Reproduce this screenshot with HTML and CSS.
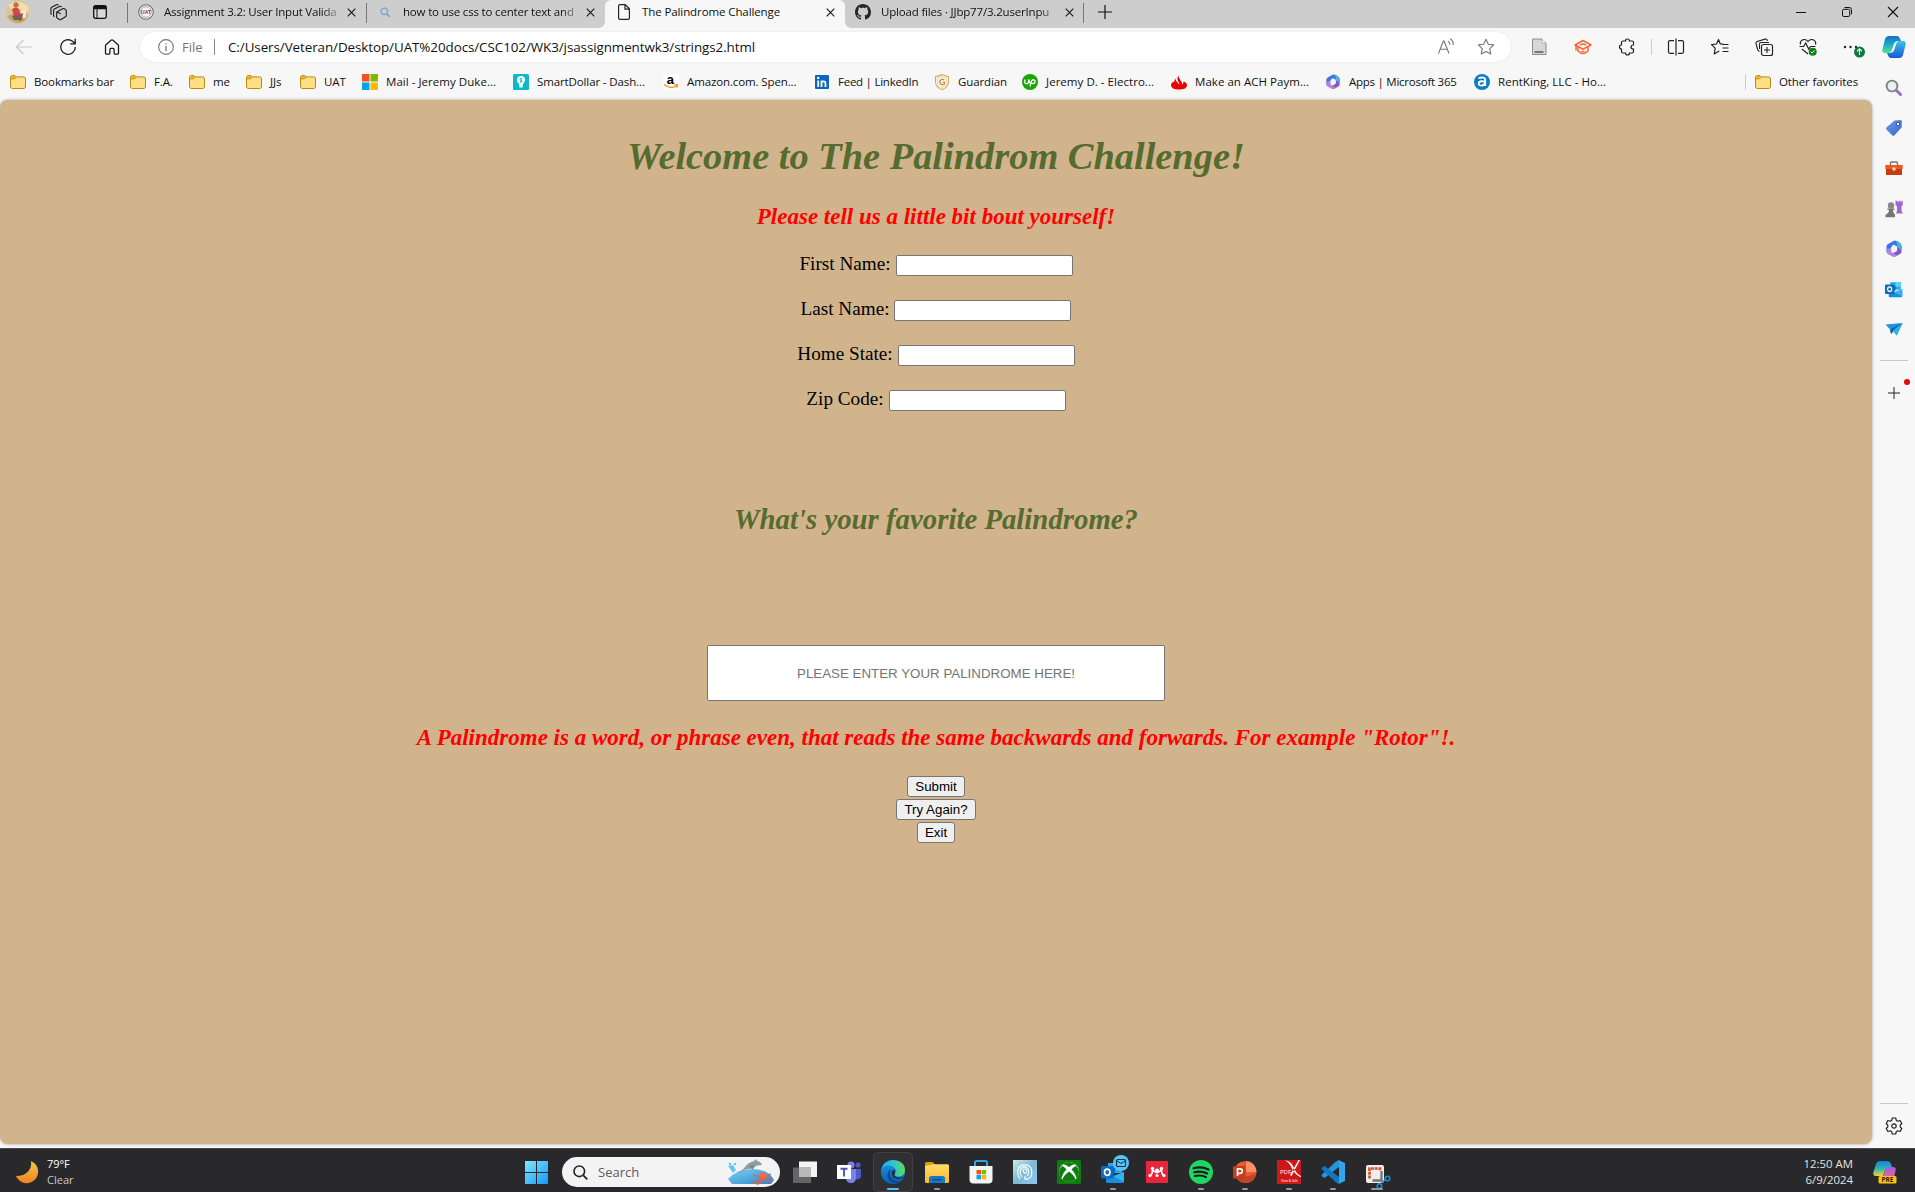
FILE: index.html
```html
<!DOCTYPE html>
<html lang="en">
<head>
<meta charset="utf-8">
<title>The Palindrome Challenge</title>
<link rel="stylesheet" href="styles.css">
</head>
<body>
<svg class="defs" width="0" height="0" aria-hidden="true">
  <defs>
    <linearGradient id="gWin" x1="0" y1="0" x2="1" y2="1"><stop offset="0" stop-color="#7fe9fb"/><stop offset="1" stop-color="#1597f5"/></linearGradient>
    <linearGradient id="gMoon" x1="0" y1="0" x2="0" y2="1"><stop offset="0" stop-color="#f6c544"/><stop offset="1" stop-color="#f08322"/></linearGradient>
    <linearGradient id="gTag" x1="0" y1="0" x2="1" y2="1"><stop offset="0" stop-color="#6e9bee"/><stop offset="1" stop-color="#3566c8"/></linearGradient>
    <linearGradient id="gEdge" x1="0" y1="0" x2="1" y2="0"><stop offset="0" stop-color="#2aa5e8"/><stop offset=".55" stop-color="#2fc6c8"/><stop offset="1" stop-color="#5fdc50"/></linearGradient>
    <linearGradient id="gEdge2" x1="0" y1="0" x2="0" y2="1"><stop offset="0" stop-color="#1d9be6"/><stop offset="1" stop-color="#0b5cb5"/></linearGradient>
    <linearGradient id="gFolder" x1="0" y1="0" x2="0" y2="1"><stop offset="0" stop-color="#ffdc6b"/><stop offset="1" stop-color="#fbb829"/></linearGradient>
    <linearGradient id="gCop" x1="0" y1="0" x2="0" y2="1"><stop offset="0" stop-color="#1670c4"/><stop offset=".45" stop-color="#1aa5c9"/><stop offset="1" stop-color="#5be08b"/></linearGradient>
    <linearGradient id="gCop2" x1="0" y1="0" x2="0" y2="1"><stop offset="0" stop-color="#41c1ef"/><stop offset="1" stop-color="#1756d6"/></linearGradient>
    <linearGradient id="gPre" x1="0" y1="0" x2="0" y2="1"><stop offset="0" stop-color="#1b7fe0"/><stop offset=".5" stop-color="#27b7b0"/><stop offset="1" stop-color="#f2d22e"/></linearGradient>
    <linearGradient id="gPre2" x1="0" y1="0" x2="0" y2="1"><stop offset="0" stop-color="#9a5cf0"/><stop offset="1" stop-color="#f5608c"/></linearGradient>
    <linearGradient id="gIce" x1="0" y1="0" x2="1" y2="1"><stop offset="0" stop-color="#d3e8ea"/><stop offset=".5" stop-color="#7db9cf"/><stop offset="1" stop-color="#8fc8f8"/></linearGradient>
    <linearGradient id="gSea" x1="0" y1="0" x2="1" y2="1"><stop offset="0" stop-color="#7fd3ee"/><stop offset="1" stop-color="#2884cf"/></linearGradient>
    <symbol id="folder" viewBox="0 0 16 16"><path d="M.5 3.5a2 2 0 0 1 2-2h2.3l1.4 1.4h7.3a2 2 0 0 1 2 2v7.6a2 2 0 0 1-2 2h-11a2 2 0 0 1-2-2z" fill="#ffdf86" stroke="#b8890c"/><path d="M1 4.8V3.3C1 2.5 1.6 2 2.3 2h2.5l1.2 1.2-1.5 1.6z" fill="#e9b728"/><path d="M1 4.9h3.6l1.6-1.8" fill="none" stroke="#b8890c" stroke-width=".8"/></symbol>
    <symbol id="close" viewBox="0 0 9 9"><path d="M.7.7l7.6 7.6M8.3.7L.7 8.3" fill="none" stroke="#1b1b1b" stroke-width="1.2"/></symbol>
    <symbol id="m365" viewBox="0 0 18 18"><path d="M8 1.2Q10 0 11.6 1L15 3q1.5 1 1.5 3v3l-4.3-2.6L9 4.7Q7 5 6.2 7.5v4.3L3 13.6Q1.5 12.600 1.500 11V6.500Q1.500 4.800 3 4z" fill="#3f75de"/><path d="M16.500 6v5.500q0 1.600-1.500 2.500l-4.500 2.600L6.200 14l4.900-2.600q1-.7 1-2V3.500z" fill="#8259c8"/><path d="M1.500 9v2.800q0 1.500 1.500 2.400l4.300 2.300q1.700.8 3.200 0L12 15.600 6.200 12V8z" fill="#b086dd"/><path d="M11 1q2-.4 4 2l1.500 3v4l-4.300-3V4z" fill="#47b6eb"/><circle cx="9.100" cy="9" r="2.900" fill="#f7f7f7"/></symbol>
    <symbol id="outlook" viewBox="0 0 24 24"><path d="M7 3h14v10H7z" fill="#28a8ea"/><path d="M14 3h7v6h-7z" fill="#50d9ff"/><path d="M7 8h7v6H7z" fill="#0364b8"/><path d="M5 12l9 5 9-5v9.500q0 1.500-1.500 1.500h-15Q5 23 5 21.500z" fill="#1490df"/><path d="M23 12v10L12 16z" fill="#32b4f0"/><rect x="0" y="6" width="12.500" height="12.500" rx="1.200" fill="#0f6cbd"/><ellipse cx="6.200" cy="12.200" rx="2.700" ry="3.100" fill="none" stroke="#fff" stroke-width="1.700"/></symbol>
  </defs>
</svg>

<div class="window">
  <header class="tabbar">
    <div class="tab-tools">
      <svg class="avatar" viewBox="0 0 24 24"><circle cx="12" cy="12" r="12" fill="#dcc59a"/><path d="M2 5q10-7 20 1l1 6-9-3-8 1z" fill="#f1dfa5"/><path d="M1 16l8-3 13 2q-3 8-10 8T1 16z" fill="#c5a569"/><path d="M6 9q4-3 7 0l2 7-7 1z" fill="#d64645"/><circle cx="10" cy="5" r="2.700" fill="#b77657"/><path d="M15 11q3-3 5 0v7h-5z" fill="#eee6db"/><path d="M6 16l7-1v5H8z" fill="#6b6357"/><path d="M12 15l5-2-1 7-3 1z" fill="#8e5749"/></svg>
      <svg class="workspaces" viewBox="0 0 18 18"><g fill="none" stroke="#1c1c1c" stroke-width="1.200" stroke-linejoin="round"><path d="M7 9.300q0-.9.800-1.300l5.700-3q.8-.4 1.600 0l1.300.7q.8.400.8 1.300v5.300q0 .9-.8 1.300l-4.700 2.900q-.8.400-1.600 0L7.800 15Q7 14.600 7 13.700zM7.500 8.400l3.800 2M4.600 13.500q-.8-.4-.8-1.300V6.700q0-.9.800-1.300L10.500 2.500q.8-.4 2 .6M1.800 11.200q-.8-.4-.8-1.200V4.600q0-.8.700-1.200L6.900.7q.8-.4 2 .6"/></g></svg>
      <svg class="tabactions" viewBox="0 0 14 14"><path d="M2.500.7h9Q13.300.7 13.300 2.500v9q0 1.800-1.800 1.800h-9Q.7 13.300.7 11.500v-9Q.7.7 2.500.7z" fill="#fff" fill-opacity=".2" stroke="#111" stroke-width="1.300"/><path d="M.7 4.200V2.500Q.7.700 2.500.7h9q1.800 0 1.800 1.800v1.700z" fill="#111"/><path d="M4 4v9" stroke="#111"/></svg>
    </div>
    <div class="tab tab-1">
      <svg class="fav" viewBox="0 0 16 16"><circle cx="8" cy="8" r="7.300" fill="#f7f3f3" stroke="#707078" stroke-width="1.100"/><circle cx="8" cy="8" r="5.300" fill="none" stroke="#aaa"/><text x="8" y="10.200" class="uat">UAT</text></svg>
      <span class="tab-title fade">Assignment 3.2: User Input Valida</span>
      <svg class="x"><use href="#close"/></svg>
    </div>
    <div class="tab tab-2">
      <svg class="fav small" viewBox="0 0 12 12"><circle cx="4.700" cy="4.700" r="3.500" fill="none" stroke="#75a9d8" stroke-width="1.500"/><path d="M7.300 7.300l3.500 3.500" stroke="#75a9d8" stroke-width="1.800"/></svg>
      <span class="tab-title fade">how to use css to center text and</span>
      <svg class="x"><use href="#close"/></svg>
    </div>
    <div class="tab tab-3 active">
      <svg class="fav page-icon" viewBox="0 0 12 16"><path d="M.6 2q0-1.400 1.400-1.400h5.200l4.200 4.200V14q0 1.400-1.400 1.400H2Q.6 15.400.6 14zM7 .8v4.300h4.300" fill="#fff" fill-opacity=".4" stroke="#222" stroke-width="1.200"/></svg>
      <span class="tab-title">The Palindrome Challenge</span>
      <svg class="x"><use href="#close"/></svg>
    </div>
    <div class="tab tab-4">
      <svg class="fav" viewBox="0 0 16 16"><path fill="#24292f" d="M8 0C3.580 0 0 3.580 0 8c0 3.540 2.290 6.530 5.470 7.590.4.070.55-.17.55-.38 0-.19-.01-.82-.01-1.490-2.010.37-2.530-.49-2.690-.94-.09-.23-.48-.94-.82-1.130-.28-.15-.68-.52-.01-.53.63-.01 1.080.58 1.230.82.72 1.210 1.870.87 2.330.66.07-.52.28-.87.510-1.070-1.780-.2-3.640-.89-3.640-3.950 0-.87.31-1.590.82-2.150-.08-.2-.36-1.020.08-2.120 0 0 .67-.21 2.200.82.64-.18 1.320-.27 2-.27s1.360.09 2 .27c1.530-1.040 2.200-.82 2.200-.82.44 1.100.16 1.920.08 2.120.51.56.82 1.270.82 2.150 0 3.070-1.870 3.750-3.650 3.950.29.25.54.73.54 1.480 0 1.070-.01 1.930-.01 2.200 0 .21.15.46.55.38A8.010 8.010 0 0 0 16 8c0-4.420-3.580-8-8-8z"/></svg>
      <span class="tab-title fade">Upload files · JJbp77/3.2userInpu</span>
      <svg class="x"><use href="#close"/></svg>
    </div>
    <svg class="newtab" viewBox="0 0 14 14"><path d="M7 0v14M0 7h14" stroke="#111" stroke-width="1.200"/></svg>
    <div class="win-controls">
      <svg viewBox="0 0 10 10"><path d="M0 5.500h10" stroke="#111"/></svg>
      <svg viewBox="0 0 10 10"><rect x=".5" y="2.300" width="7.200" height="7.200" rx="1.300" fill="none" stroke="#111"/><path d="M2.500.5H7.200Q9.500.5 9.500 2.800V7.300" fill="none" stroke="#111"/></svg>
      <svg viewBox="0 0 10 10"><path d="M0 0l10 10M10 0L0 10" stroke="#111" stroke-width="1.100"/></svg>
    </div>
  </header>

  <nav class="toolbar">
    <div class="nav-buttons">
      <svg viewBox="0 0 18 18"><path d="M17 9H1.500M8.500 2L1.500 9l7 7" fill="none" stroke="#c9c9c9" stroke-width="1.200"/></svg>
      <svg viewBox="0 0 18 18"><path d="M16.300 9A7.300 7.300 0 1 1 13.500 3.300L16 5.500M16.200.8v5h-5" fill="none" stroke="#1c1c1c" stroke-width="1.300"/></svg>
      <svg viewBox="0 0 18 18"><path d="M2.500 8q0-.7.500-1.200L8 2.200q1-.8 2 0L15 6.800q.5.500.5 1.200v7q0 1.200-1.200 1.200h-2q-1.200 0-1.200-1.200v-3.500q0-1.200-1.200-1.200H8.100q-1.200 0-1.200 1.200V15q0 1.200-1.200 1.200h-2Q2.500 16.200 2.500 15z" fill="none" stroke="#1c1c1c" stroke-width="1.300"/></svg>
    </div>
    <div class="address">
      <svg class="info" viewBox="0 0 16 16"><circle cx="8" cy="8" r="7.400" fill="none" stroke="#757575" stroke-width="1.100"/><path d="M8 7v5M8 4.200v1.400" stroke="#757575" stroke-width="1.300"/></svg>
      <span class="scheme">File</span>
      <span class="address-sep"></span>
      <span class="url">C:/Users/Veteran/Desktop/UAT%20docs/CSC102/WK3/jsassignmentwk3/strings2.html</span>
      <div class="address-icons">
        <svg viewBox="0 0 18 18"><path d="M1.500 15.500L6.300 3h.8L12 15.500M3.200 11.300h7M11 3.200q2 1.300 2 3.600M13.300.8q3.200 2.300 3 6.200" fill="none" stroke="#777" stroke-width="1.100"/></svg>
        <svg viewBox="0 0 18 18"><path d="M9 1.300l2.300 5 5.400.6-4 3.700 1.100 5.500L9 13.400l-4.800 2.700 1.100-5.500-4-3.700 5.400-.6z" fill="none" stroke="#777" stroke-width="1.100" stroke-linejoin="round"/></svg>
      </div>
    </div>
    <div class="extensions">
      <svg viewBox="0 0 18 18"><path d="M2.500 1h9.500L16 5v11.500H2.500z" fill="#d7d7d7" stroke="#8b8b8b"/><path d="M4.500 14h9" stroke="#777" stroke-width="2"/><path d="M12 1v4h4" fill="#fff" stroke="#999" stroke-width=".7"/></svg>
      <svg viewBox="0 0 18 18"><path d="M1 7L9 2.500 17 7 9 11.200zM4 9v4q5 5 10 0V9M2 8v4.500M6 7.200q3-2.200 6 0M7.500 13q1.500 1 3 0" fill="none" stroke="#fb6334" stroke-width="1.500" stroke-linejoin="round"/></svg>
      <svg viewBox="0 0 18 18"><path d="M5 3h2.500q0-2 2-2t2 2H14q1.500 0 1.500 1.500V7q-2.500 0-2.500 2t2.500 2v2.500Q15.500 15 14 15h-2.500q0 2-2 2t-2-2H5q-1.500 0-1.500-1.500V11q-2 0-2-2t2-2V4.500Q3.500 3 5 3z" fill="none" stroke="#222" stroke-width="1.200"/></svg>
    </div>
    <span class="tool-sep"></span>
    <div class="tool-icons">
      <svg viewBox="0 0 18 18"><path d="M7 2.700H3q-1.500 0-1.500 1.500v9.600q0 1.500 1.500 1.500h4M11 2.700h4q1.500 0 1.500 1.500v9.600q0 1.500-1.500 1.500h-4M9 .5v17" fill="none" stroke="#222" stroke-width="1.200"/></svg>
      <svg viewBox="0 0 18 18"><path d="M12.500 6.200L9.300 6 7.500 1.500 5.500 6l-5 .6 3.700 3.500L3.200 16l5-3M11.500 6.500h6M11.500 10h6M11.500 13.500h6" fill="none" stroke="#222" stroke-width="1.200" stroke-linejoin="round"/></svg>
      <svg viewBox="0 0 18 18"><rect x="6.500" y="6.500" width="11" height="11" rx="2" fill="none" stroke="#222" stroke-width="1.200"/><path d="M12 9v6M9 12h6M4.500 13.500Q3 12.800 2.600 11.500L1 5.500Q.6 4 2.200 3.400L10 1.100q1.700-.4 2.200 1L12.500 3M4.500 11V6q0-1.500 1.500-1.500h8" fill="none" stroke="#222" stroke-width="1.100"/></svg>
      <svg viewBox="0 0 18 18"><path d="M1.500 6.500Q.5 3 4 1.700q3-.8 5 1.800 2-2.600 5-1.800 3.500 1.300 2.500 4.800M.5 8.500h4.200l2-3.500 3 6 1.800-2.500h5M3 11l6 5" fill="none" stroke="#222" stroke-width="1.200"/><circle cx="13.700" cy="13.700" r="4" fill="#0f8017"/><path d="M11.800 13.800l1.300 1.200 2.500-2.600" fill="none" stroke="#fff"/></svg>
      <svg class="more" viewBox="0 0 22 18"><g fill="#222"><circle cx="2" cy="9" r="1.200"/><circle cx="7.500" cy="9" r="1.200"/><circle cx="13" cy="9" r="1.200"/></g><circle cx="16.500" cy="14" r="5.500" fill="#0e7a3c"/><path d="M16.500 17v-6M14 13.300l2.500-2.500 2.500 2.500" fill="none" stroke="#fff" stroke-width="1.100"/></svg>
    </div>
    <svg class="copilot" viewBox="0 0 24 22"><path d="M7 0h8q2 0 2.700 2L19 5h-3q-3 0-4 3l-2.500 7q-.8 2-2.800 2H3q-3.500 0-2.600-3.500L3 3q1-3 4-3z" fill="url(#gCop)"/><path d="M17 22H9q-2 0-2.700-2L5 17h3q3 0 4-3l2.500-7q.8-2 2.800-2H21q3.500 0 2.600 3.500L21 19q-1 3-4 3z" fill="url(#gCop2)"/><path d="M12 8l2.500-1-2.500 7-2 1z" fill="#eaf8fc"/></svg>
  </nav>

  <div class="body-row">
    <div class="main-col">
      <div class="bookmarks">
        <div class="bm"><svg><use href="#folder"/></svg><span>Bookmarks bar</span></div>
        <div class="bm"><svg><use href="#folder"/></svg><span>F.A.</span></div>
        <div class="bm"><svg><use href="#folder"/></svg><span>me</span></div>
        <div class="bm"><svg><use href="#folder"/></svg><span>JJs</span></div>
        <div class="bm"><svg><use href="#folder"/></svg><span>UAT</span></div>
        <div class="bm loose"><svg viewBox="0 0 16 16"><path d="M0 0h7.500v7.500H0z" fill="#f6511d"/><path d="M8.500 0H16v7.500H8.500z" fill="#7fba00"/><path d="M0 8.500h7.500V16H0z" fill="#00a4ef"/><path d="M8.500 8.500H16V16H8.500z" fill="#ffb900"/></svg><span>Mail - Jeremy Duke...</span></div>
        <div class="bm"><svg viewBox="0 0 16 16"><rect width="16" height="16" rx="1.500" fill="#0bb9c8"/><path d="M8 2a4 4 0 0 1 4 4q0 2-2 4l-.5 3.500h-3L6 10Q4 8 4 6a4 4 0 0 1 4-4z" fill="#fff"/><path d="M9.500 4.800Q7 4 7 5.200T9 7q.5 1.500-2.300.8M8 3.700v5" fill="none" stroke="#0bb9c8" stroke-width=".8"/></svg><span>SmartDollar - Dash...</span></div>
        <div class="bm"><svg viewBox="0 0 16 16"><rect width="16" height="16" rx="2" fill="#fff"/><text x="3.700" y="9.500" class="amz">a</text><path d="M1 10.500q6 5 12.500 1.500M11.500 11l3-.3-.6 3" fill="none" stroke="#f79a1c" stroke-width="1.400"/></svg><span>Amazon.com. Spen...</span></div>
        <div class="bm tight"><svg viewBox="0 0 16 16"><rect x="1" y="1" width="14" height="14" rx="1" fill="#0a66c2"/><path d="M4.200 6.500V13M7.500 13V6.500M7.500 9.500q0-2.200 2-2.200t2 2.200V13" fill="none" stroke="#fff" stroke-width="1.800"/><circle cx="4.200" cy="4" r="1.200" fill="#fff"/></svg><span>Feed | LinkedIn</span></div>
        <div class="bm"><svg viewBox="0 0 16 16"><path d="M8 .7l6.500 2v5q0 5-6.500 8-6.500-3-6.500-8v-5z" fill="none" stroke="#d7ab57" stroke-width="1.100"/><path d="M8 2.700l4.500 1.500v3.500q0 3.500-4.500 6-4.500-2.500-4.500-6V4.200z" fill="none" stroke="#e6cb94" stroke-width=".8"/><path d="M10.300 6.200Q8.500 4.500 6.700 6t0 4q2 1.300 3.700-.2V8.200H8.500" fill="none" stroke="#bd8426" stroke-width="1.100"/></svg><span>Guardian</span></div>
        <div class="bm loose"><svg viewBox="0 0 16 16"><circle cx="8" cy="8" r="8" fill="#14a800"/><path d="M2.800 5.500v2.200q0 2 1.900 2t1.900-2V5.500q1 3.600 2.300 4M8 12.500l1.300-5q.7-2 2.500-1.700 1.600.5 1.300 2.200-.6 2-2.600 1.500-1-.3-1.500-1" fill="none" stroke="#fff" stroke-width="1.300"/></svg><span>Jeremy D. - Electro...</span></div>
        <div class="bm loose"><svg viewBox="0 0 16 16"><path d="M3.500 7.500Q0 8.500 0 11q0 4.500 8 4.500t8-4.500Q16 8.700 12.500 7.500q0 1.700-.8 3Q11 8 9 5.500 7.300 3.300 8 1.500 5.800 3 6.500 5.500q1 2.800 2 5Q7.500 9.500 5.700 7.500 4.700 6.200 5 4.500 3 6.200 3.500 7.500z" fill="#ec0000"/><path d="M8 1.200Q7.500 3 10 6q2 2.800 1.500 4M5 5q0 1.500 2 3.500l1 1.500" fill="none" stroke="#fff" stroke-width=".6"/></svg><span>Make an ACH Paym...</span></div>
        <div class="bm tight"><svg><use href="#m365"/></svg><span>Apps | Microsoft 365</span></div>
        <div class="bm loose"><svg viewBox="0 0 16 16"><circle cx="8" cy="8" r="8" fill="#0b7cc4"/><path d="M4.500 4.200q6.700-2 6.700 1.600V12M11 7.600Q4.500 6.500 4.700 9.500q.4 2.600 3.500 2 2.500-.5 2.800-2.500" fill="none" stroke="#fff" stroke-width="1.900"/></svg><span>RentKing, LLC - Ho...</span></div>
        <div class="bm other"><svg><use href="#folder"/></svg><span>Other favorites</span></div>
      </div>

      <main class="page">
        <h1>Welcome to The Palindrom Challenge!</h1>
        <h3 class="intro">Please tell us a little bit bout yourself!</h3>
        <form>
          <div class="field"><label for="first">First Name:</label><input id="first" type="text"></div>
          <div class="field"><label for="last">Last Name:</label><input id="last" type="text"></div>
          <div class="field"><label for="state">Home State:</label><input id="state" type="text"></div>
          <div class="field"><label for="zip">Zip Code:</label><input id="zip" type="text"></div>
          <h2>What's your favorite Palindrome?</h2>
          <input class="palindrome" type="text" placeholder="PLEASE ENTER YOUR PALINDROME HERE!">
          <h3 class="hint">A Palindrome is a word, or phrase even, that reads the same backwards and forwards. For example "Rotor"!.</h3>
          <div class="actions">
            <button type="button" class="b-submit">Submit</button>
            <button type="button" class="b-again">Try Again?</button>
            <button type="button" class="b-exit">Exit</button>
          </div>
        </form>
      </main>
    </div>

    <aside class="sidebar">
      <svg viewBox="0 0 18 18"><path d="M10.500 10.500l5 5" stroke="#a267d4" stroke-width="3" stroke-linecap="round"/><circle cx="7" cy="7" r="5.400" fill="#e9f1f4" stroke="#828282" stroke-width="1.900"/></svg>
      <svg viewBox="0 0 18 18"><path d="M9.500 1.500L15.500 1q1.500 0 1.500 1.500L16.500 8.500 9.500 16.300q-1.200 1-2.300 0L1.500 10.800q-1-1.200 0-2.300z" fill="url(#gTag)"/><circle cx="13" cy="5" r="1.700" fill="#fff" stroke="#2b519f"/></svg>
      <svg viewBox="0 0 18 18"><path d="M5.500 6V4q0-1 1-1h5q1 0 1 1v2" fill="none" stroke="#777" stroke-width="1.400"/><path d="M.3 6h17.400v4H.3z" fill="#ee5a22"/><path d="M1 10h16v6H1z" fill="#c93c10"/><circle cx="9" cy="10" r="1.800" fill="#ddd"/></svg>
      <svg viewBox="0 0 18 18"><path d="M10.500.8h2V2h1.200V.8h1.700V2h1V.8h1.300v4.500l-1.200 1V11l1.500 2.500h-7L12 11V6.300l-1.500-1z" fill="#a067d0"/><circle cx="6" cy="5.500" r="3.200" fill="#888"/><path d="M2.500 8.500h7v1.600H8q0 3 2 4.500v2.700H.5v-2.500Q4 13 4 10.100H2.500z" fill="#777"/></svg>
      <svg><use href="#m365"/></svg>
      <svg class="side-mail"><use href="#outlook"/></svg>
      <svg viewBox="0 0 18 18"><path d="M.5 4.500L17.500 3l-5.700 12.500-3.300-4-2.500 2.500-.8-4.500z" fill="#1f93d9"/><path d="M17.500 3l-12.300 6.500.8 4.500 2-3.500z" fill="#0c5f9e"/><path d="M17.500 3L8 10.500l3.800 5z" fill="#2cb2ee"/></svg>
      <span class="side-sep"></span>
      <span class="add"><svg viewBox="0 0 12 12"><path d="M6 0v12M0 6h12" stroke="#222"/></svg><i class="dot"></i></span>
      <span class="side-sep bottom"></span>
      <svg class="gear" viewBox="0 0 18 18"><path d="M7.300 1h3.400l.6 2.400 1.500.8 2.300-.7L16.800 6.500 15.200 8.200v1.700l1.600 1.600-1.700 3-2.300-.7-1.500.9-.6 2.300H7.300l-.6-2.300-1.500-.9-2.300.7-1.700-3 1.600-1.600V8.200L1.200 6.500l1.700-3 2.300.7 1.500-.8z" fill="none" stroke="#222" stroke-width="1.200" stroke-linejoin="round"/><circle cx="9" cy="9" r="2.200" fill="none" stroke="#222" stroke-width="1.200"/></svg>
    </aside>
  </div>

  <footer class="taskbar">
    <div class="weather">
      <svg viewBox="0 0 22 22"><path d="M15 0A11.500 11.500 0 1 1 0 15Q8 15 12 10.500T15 0z" fill="url(#gMoon)"/></svg>
      <div><div class="temp">79°F</div><div class="sky">Clear</div></div>
    </div>
    <svg class="start" viewBox="0 0 23 23"><path d="M0 0h11v11H0zM12 0h11v11H12zM0 12h11v11H0zM12 12h11v11H12z" fill="url(#gWin)"/></svg>
    <div class="search">
      <svg class="glass" viewBox="0 0 15 15"><circle cx="6.300" cy="6.300" r="5.300" fill="none" stroke="#222" stroke-width="1.600"/><path d="M10.300 10.300l4 4" stroke="#222" stroke-width="1.800"/></svg>
      <span>Search</span>
      <svg class="art" viewBox="0 0 48 26"><path d="M1 20Q10 10 25 10q16 0 22 11l-3 4H5z" fill="url(#gSea)"/><path d="M9 14q6-2 9-6 3-4.500 9-6l2-2 1 2q4 .5 5 4l-5 .5q-3 3-8 3.500-6 0-8 4-1-1.500-5 0z" fill="#8d9da3"/><path d="M22 7l5-1-1 5z" fill="#77898f"/><path d="M1 7l5-1 3 5-3 3z" fill="#65c9ee"/><circle cx="3" cy="5" r="1.300" fill="#65c9ee"/><circle cx="8" cy="5" r="1.300" fill="#65c9ee"/><ellipse cx="36" cy="17" rx="3.500" ry="4" fill="#ef6a50"/><path d="M35 18q-5 0-8-2M35 20q-5 4-10 3M36 20q-3 5-6 5M37 20q5 4 8 2M37 19q5 0 6-4" fill="none" stroke="#e45f49" stroke-width="1.500" stroke-linecap="round"/></svg>
    </div>
    <div class="apps">
      <span class="app"><svg viewBox="0 0 24 24"><path d="M6 1.500h18v15.500H6z" fill="#f4f4f4"/><path d="M0 7.500h18V23H0z" fill="#6c6c6c" fill-opacity=".9"/><path d="M6 7.500h12V17H6z" fill="#b9b9b9"/></svg></span>
      <span class="app"><svg viewBox="0 0 24 24"><circle cx="21" cy="5" r="2.600" fill="#5059c9"/><path d="M17 9h7v7q0 3-3.500 3.500H17z" fill="#5059c9"/><circle cx="14" cy="5" r="3.500" fill="#7b83eb"/><path d="M9 9h10v8q0 6-5 6-4 0-5-4z" fill="#7b83eb"/><path d="M0 5h14v14H0z" fill="#fff"/><path d="M3.500 8.700h7M7 8.700v7.800" stroke="#4b53bc" stroke-width="1.900"/></svg></span>
      <span class="app open current"><svg viewBox="0 0 24 24"><circle cx="12" cy="12" r="12" fill="url(#gEdge2)"/><path d="M0 11Q2 0 12.500 0 24 1 24 10.500q-.5 6-7 6-4-.5-3-3 2-1.500.5-4.500Q12 5.500 8 5.500 2 5.500 0 11z" fill="url(#gEdge)"/><path d="M8.500 10Q4 16 9 21q5 4.500 11-.5-5 1.500-9-2-4-4-1-9z" fill="#0b4a94"/><path d="M13 9.500q-3 2-2.200 5 1.200 4.200 6.200 4.500 3 0 5-1.300.8-.5 1-1-3 1.500-6.500.8-3.800-1-3-3.200 1.200-1.800-.5-4.800z" fill="#29292b"/></svg></span>
      <span class="app open"><svg viewBox="0 0 24 24"><path d="M0 3.500Q0 2 1.500 2h6L10 4.500v4H0z" fill="#dd9b09"/><path d="M0 6l9-1.800h13.500Q24 4.200 24 5.700v16.100q0 1.200-1.500 1.200h-21Q0 23 0 21.800z" fill="url(#gFolder)"/><path d="M4 23v-4.500q0-2.500 2.500-2.500h11q2.500 0 2.500 2.500V23z" fill="#1678c7"/><path d="M7.500 19.700h9" stroke="#0b4e8a" stroke-width="1.400"/></svg></span>
      <span class="app"><svg viewBox="0 0 24 24"><path d="M6 7V2.500Q6 1 7.500 1h9Q18 1 18 2.500V7" fill="none" stroke="#28a9e5" stroke-width="2"/><path d="M.5 6h23v13.500q0 4-4 4h-15q-4 0-4-4z" fill="#f5f5f5"/><path d="M7.500 10H12v4.300H7.500z" fill="#f25022"/><path d="M12.800 10h4.400v4.300h-4.400z" fill="#7fba00"/><path d="M7.500 15H12v4.300H7.500z" fill="#00a4ef"/><path d="M12.800 15h4.400v4.300h-4.400z" fill="#ffb900"/></svg></span>
      <span class="app"><svg viewBox="0 0 24 24"><path d="M0 0h24v24H0z" fill="url(#gIce)"/><path d="M7 19q-3-4-2-9 1.500-5 7-5t6.500 5Q20 17 15 19h-3v-3M9 17q-3-4-1-8 4-4 7 0 2 4-1 7M11 13q-2-3 1-4 3 1 1 4z" fill="none" stroke="#e9fbfd" stroke-width="1.300"/></svg></span>
      <span class="app"><svg viewBox="0 0 24 24"><rect width="24" height="24" rx="1.500" fill="#107c10"/><circle cx="12" cy="12" r="10" fill="#fff"/><path d="M5 4.500q3-.8 7 2.500 4-3.300 7-2.500-3-2.500-7-2.500t-7 2.500zM4.200 18.800Q6 12.500 9.500 9.500 6.500 6 5 6q-3 2.700-3 6.300 0 4 2.200 6.500zM19.800 18.800Q18 12.500 14.500 9.500 17.500 6 19 6q3 2.700 3 6.300 0 4-2.200 6.500zM12 11.500q-6 4.500-6.500 8.300 6 4.500 13 0-.5-3.800-6.500-8.300z" fill="#107c10"/></svg></span>
      <span class="app open"><svg class="mail-app"><use href="#outlook"/></svg><svg class="mail-badge" viewBox="0 0 16 16"><circle cx="8" cy="8" r="8" fill="#58c5fb"/><rect x="3.500" y="4.500" width="9" height="7" rx="1" fill="none" stroke="#15344a" stroke-width="1.200"/><path d="M3.500 5.500L8 8.500l4.500-3" fill="none" stroke="#15344a"/></svg></span>
      <span class="app"><svg viewBox="0 0 24 24"><path d="M1 1h22v22H1z" fill="#e9243c"/><path d="M5.500 15.500q2-1.500 2-5L12 12.500l4.500-2q0 3.500 2 5" fill="none" stroke="#fff" stroke-width="1.600"/><circle cx="7.500" cy="8.500" r="1.700" fill="#fff"/><circle cx="16.500" cy="8.500" r="1.700" fill="#fff"/><circle cx="12" cy="10.500" r="2" fill="#fff"/><circle cx="5" cy="15.500" r="1.600" fill="#fff"/><circle cx="12" cy="15.500" r="1.500" fill="#fff"/><circle cx="19" cy="15.500" r="1.600" fill="#fff"/></svg></span>
      <span class="app open"><svg viewBox="0 0 24 24"><circle cx="12" cy="12" r="12" fill="#1ed760"/><path d="M4.500 8.300q8-2.200 15 1.300M5.300 12.200q7-1.800 12.800 1.200M6 16q6-1.400 10.800 1" fill="none" stroke="#171a18" stroke-width="2.200" stroke-linecap="round"/></svg></span>
      <span class="app open"><svg viewBox="0 0 24 24"><path d="M12.500 1A11 11 0 0 1 23.500 12H12.500z" fill="#ff8f6b"/><path d="M12.500 1v11h11a11 11 0 0 1-22 0Q2 1.500 12.500 1z" fill="#e75b35"/><path d="M2 14q10 5 21-.5Q21.500 23 12.500 23 4.500 22.500 2 14z" fill="#c6402a"/><rect x="0" y="6" width="12.500" height="12.500" rx="1.200" fill="#c43e1c"/><path d="M4.500 16V8.800H7q2.300 0 2.300 2.200T7 13.300H4.500" fill="none" stroke="#fff" stroke-width="1.700"/></svg></span>
      <span class="app open"><svg viewBox="0 0 24 24"><path d="M0 0h24v24H0z" fill="#cf1717"/><path d="M8 .5q5 0 8 5.500 3 8 8 10v1.200q-6-2-9.500-9.700Q12 2 8 .5zM23 0h-1.500L13 15l1.500 1z" fill="#fff"/><text x="3" y="13.500" class="pdf">PDF</text><text x="4" y="21.500" class="pdf tiny">View &amp; Edit</text></svg></span>
      <span class="app open"><svg viewBox="0 0 24 24"><path d="M18 0l-3 1.500L1 14.500q-1 .8 0 1.700l1.500 1.300q.8.600 1.700 0L18 7z" fill="#2795d9"/><path d="M18 24l-3-1.500L1 9.500q-1-.8 0-1.700l1.500-1.300q.8-.6 1.700 0L18 17z" fill="#1277bd"/><path d="M17.500 0L24 3v18l-6.500 3Q18 23 18 22V2q0-1-.5-2z" fill="#31a5f0"/></svg></span>
      <span class="app open wide-run"><svg class="snip" viewBox="0 0 24 24"><rect x="0" y="0" width="18" height="18" rx="2" fill="#eee"/><path d="M3.500 13.500V3.500H14V6" fill="none" stroke="#d9512c" stroke-width="2.700" stroke-dasharray="3 .8"/><path d="M15.500 6v9.500H6.500" fill="none" stroke="#747474" stroke-width="2.300"/><circle cx="21.500" cy="13.500" r="2.300" fill="none" stroke="#208fc9" stroke-width="1.600"/><circle cx="13.500" cy="21" r="2.300" fill="none" stroke="#208fc9" stroke-width="1.600"/><path d="M19.500 14.500L15 18" stroke="#208fc9" stroke-width="1.500"/></svg></span>
    </div>
    <div class="clock"><div>12:50 AM</div><div>6/9/2024</div></div>
    <svg class="pre" viewBox="0 0 24 24"><path d="M7 1h7q3 0 4 3l1 3h-3l-4 4-2 5H3q-3.500 0-2.500-4L3 4q1-3 4-3z" fill="url(#gPre)"/><path d="M16 7h4q3.500 0 2.700 3.500L21 17H10l2-6q1-4 4-4z" fill="url(#gPre2)"/><rect x="5.500" y="16" width="18" height="7.500" rx="1.500" fill="#fbc40e"/><text x="14.500" y="22.200" class="pre-text">PRE</text></svg>
  </footer>
</div>
</body>
</html>
```
FILE: styles.css
```css
* { box-sizing: border-box; }
html, body { margin: 0; height: 100%; overflow: hidden; }
body { font-family: "Open Sans", sans-serif; font-size: 11.5px; color: #111; background: #f7f7f7; }
svg { display: block; flex: none; overflow: visible; }
.defs { position: absolute; }
.window { display: flex; flex-direction: column; width: 1915px; height: 1192px; }

/* tab strip */
.tabbar { display: flex; height: 28px; background: #cdcdcd; align-items: stretch; flex: none; }
.tab-tools { display: flex; width: 127px; padding-left: 6px; align-items: center; padding-bottom: 4px; }
.avatar { width: 24px; height: 24px; margin-right: 20px; }
.workspaces { width: 17px; height: 17px; margin-right: 26px; }
.tabactions { width: 14px; height: 14px; }
.tab { display: flex; align-items: center; padding: 0 10px 4px 11px; flex: none; }
.tab-1, .tab-2 { width: 239px; background: linear-gradient(#777, #777) no-repeat 0 3px / 1px 20px; }
.tab-1 { padding-left: 11px; }
.tab-2 { padding-left: 14px; }
.tab-2 .fav { margin-right: 12px; }
.tab-3 { width: 240px; padding-left: 13px; }
.tab-3 .fav { margin-right: 12px; }
.tab-4 { width: 239px; padding-left: 10px; background: linear-gradient(#777, #777) no-repeat 100% 3px / 1px 20px; }
.tab.active { background: #f7f7f7; border-radius: 6px 6px 0 0; position: relative; }
.tab.active::before, .tab.active::after { content: ""; position: absolute; bottom: 0; width: 6px; height: 6px; }
.tab.active::before { right: 100%; background: radial-gradient(circle at 0 0, transparent 5.500px, #f7f7f7 6px); }
.tab.active::after { left: 100%; background: radial-gradient(circle at 100% 0, transparent 5.500px, #f7f7f7 6px); }
.fav { width: 16px; height: 16px; margin-right: 10px; }
.fav.small { width: 11px; height: 11px; }
.page-icon { width: 12px; }
.uat { font: 700 5px "Liberation Sans", sans-serif; fill: #a51d31; text-anchor: middle; }
.tab-title { flex: 1; white-space: nowrap; line-height: 18px; letter-spacing: -0.1px; }
.fade { -webkit-mask-image: linear-gradient(90deg, #000 158px, rgba(0,0,0,.2) 176px); mask-image: linear-gradient(90deg, #000 158px, rgba(0,0,0,.2) 176px); }
.tab-1 .tab-title { letter-spacing: -0.22px; }
.tab-2 .tab-title { letter-spacing: -0.18px; }
.tab-4 .tab-title { letter-spacing: -0.18px; }
.x { width: 9px; height: 9px; margin-left: 9px; }
.newtab { width: 14px; height: 14px; margin: 5px 0 0 14px; }
.win-controls { display: flex; gap: 36px; margin-left: auto; padding: 7px 17px 0 0; }
.win-controls svg { width: 10px; height: 10px; }

/* toolbar */
.toolbar { display: flex; height: 36px; align-items: center; flex: none; padding-top: 2px; }
.nav-buttons { display: flex; gap: 26px; padding-left: 15px; width: 140px; }
.nav-buttons svg, .address-icons svg, .extensions svg, .tool-icons svg { width: 18px; height: 18px; }
.address { display: flex; align-items: center; width: 1371px; height: 30px; border-radius: 15px; background: #fff; padding: 0 16px 0 18px; box-shadow: 0 0 2px #ddd; font-size: 13px; line-height: 18px; }
.info { width: 16px; height: 16px; margin-right: 8px; }
.scheme { width: 32px; color: #757575; }
.address-sep { width: 1px; height: 16px; background: #888; margin-right: 13px; }
.url { flex: 1; color: #111; font-size: 13.4px; letter-spacing: -0.07px; white-space: nowrap; }
.address-icons { display: flex; gap: 22px; }
.extensions { display: flex; gap: 26px; padding-left: 19px; }
.tool-sep { width: 1px; height: 16px; background: #cdcdcd; margin: 0 15px; }
.tool-icons { display: flex; gap: 26px; }
.tool-icons .more { width: 22px; }
.copilot { width: 24px; height: 22px; margin-left: 17px; }

.body-row { display: flex; height: 1084px; flex: none; }
.main-col { width: 1872px; display: flex; flex-direction: column; }

/* bookmarks */
.bookmarks { display: grid; height: 36px; padding-left: 10px; align-items: center; grid-template-columns: 120px 59px 57px 54px 62px 151px 150px 151px 120px 88px 149px 154px 149px 271px 1fr; }
.bm { display: flex; gap: 8px; align-items: center; white-space: nowrap; line-height: 18px; letter-spacing: -0.12px; }
.bm.loose { letter-spacing: 0.04px; }
.bm.tight { letter-spacing: -0.25px; }
.bm svg { width: 16px; height: 16px; }
.other { border-left: 1px solid #ccc; padding-left: 9px; height: 16px; }
.amz { font: 700 13px "Liberation Sans", sans-serif; }

/* page */
.page { height: 1044px; background: #d2b48c; border-radius: 8px; box-shadow: 0 0 3px #999; text-align: center; font: 19.2px "Liberation Serif", serif; color: #000; padding-top: 34px; }
.page form { display: flex; flex-direction: column; align-items: center; }
.page h1, .page h2, .page h3 { margin: 0; font-style: italic; font-weight: bold; }
.page h1 { font-size: 38.4px; line-height: 44px; color: #556b2f; }
.page h2 { font-size: 28.8px; line-height: 34px; color: #556b2f; margin-top: 68px; }
.page h3 { font-size: 23px; line-height: 26px; color: #f00; }
.page .intro { margin: 26px 0 24px; }
.field { display: flex; gap: 5px; height: 22px; margin-bottom: 23px; }
.field label { line-height: 22px; margin-top: -1px; }
.field input { width: 177px; height: 21px; margin-top: 1px; }
.page input { border: 1px solid #767676; border-radius: 2px; background: #fff; outline: 0; padding: 1px 2px; }
.page .palindrome { width: 458px; height: 56px; margin-top: 109px; text-align: center; font: 13.333px "Liberation Sans", sans-serif; }
.palindrome::placeholder { color: #757575; }
.page .hint { margin-top: 24px; }
.actions { display: flex; flex-direction: column; align-items: center; gap: 2px; margin-top: 25px; }
.actions button { height: 21px; padding: 0; border: 1px solid #767676; border-radius: 3px; background: #efefef; color: #000; font: 13.333px/19px "Liberation Sans", sans-serif; }
.b-submit { width: 58px; }
.b-again { width: 80px; }
.b-exit { width: 38px; }

/* sidebar */
.sidebar { display: flex; flex-direction: column; width: 43px; align-items: center; padding-top: 15px; gap: 22.200px; }
.sidebar > svg { width: 18px; height: 18px; }
.side-sep { width: 28px; height: 1px; background: #c8c8c8; }
.add { position: relative; width: 12px; height: 12px; margin-top: 3px; }
.dot { position: absolute; width: 6px; height: 6px; border-radius: 50%; background: #e00b0b; left: 16px; top: -8px; }
.side-sep.bottom { margin-top: auto; }
.sidebar .gear { margin: -9px 0 13px; }

/* taskbar */
.taskbar { display: flex; height: 44px; align-items: center; background: #29292b; color: #fff; border-top: 1px solid #4a4a4b; flex: none; padding-top: 3px; }
.weather { display: flex; gap: 9px; width: 525px; padding-left: 16px; align-items: center; font-size: 11px; line-height: 16px; }
.weather svg { width: 22px; height: 22px; }
.temp { letter-spacing: -0.1px; }
.sky { color: #c8c8c8; }
.start { width: 23px; height: 23px; }
.search { display: flex; align-items: center; width: 218px; height: 30px; margin-left: 14px; padding: 0 5px 0 11px; border-radius: 15px; background: #f3f3f3; color: #5c5c5c; font-size: 13px; }
.glass { width: 15px; height: 15px; margin-right: 10px; }
.art { width: 48px; height: 26px; margin-left: auto; }
.apps { display: flex; margin-left: 3px; }
.app { width: 44px; height: 40px; display: flex; align-items: center; justify-content: center; position: relative; }
.app svg { width: 24px; height: 24px; }
.app.open::after { content: ""; position: absolute; bottom: 2px; left: 19px; width: 6px; height: 2px; border-radius: 1px; background: #969696; }
.app.current { background: #303032; border: 1px solid #414143; border-radius: 5px; width: 40px; margin: 0 2px; }
.app.current::after { left: 13px; width: 12px; background: #4cc2ff; bottom: 1px; }
.app .mail-app { margin-left: -1px; }
.app .mail-badge { position: absolute; width: 16px; height: 16px; left: 22px; top: 3px; }
.app .snip { margin: 9px 0 0 1px; }
.wide-run.open::after { width: 12px; left: 16px; }
.pdf { font: 6px "Open Sans", sans-serif; fill: #fff; }
.pdf.tiny { font-size: 3.200px; }
.clock { margin-left: auto; text-align: right; font-size: 11.4px; line-height: 16px; color: #e3e3e3; }
.pre { width: 24px; height: 24px; margin: 0 18px 0 20px; }
.pre-text { font: 700 6.500px "Open Sans", sans-serif; fill: #222; text-anchor: middle; }
```
